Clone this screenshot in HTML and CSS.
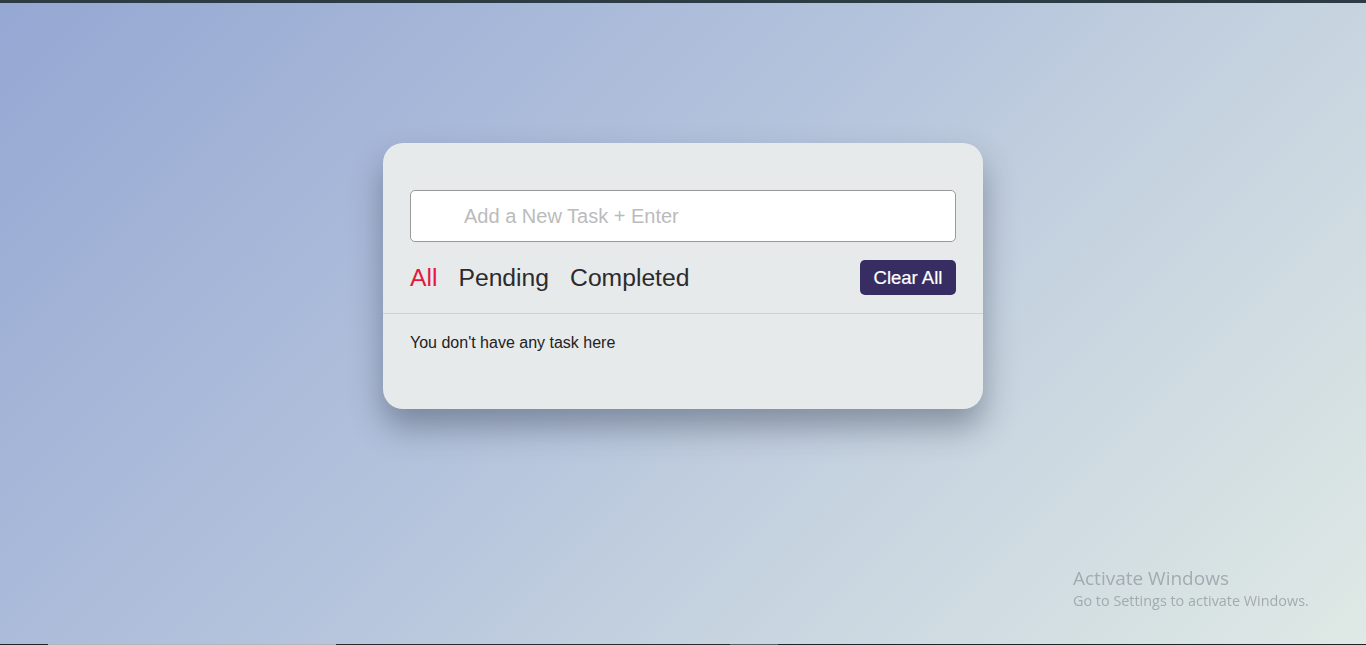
FILE: index.html
```html
<!DOCTYPE html>
<html lang="en">
<head>
<meta charset="utf-8">
<title>Todo</title>
<link rel="stylesheet" href="styles.css">
</head>
<body>
<div class="topbar"></div>
<main class="stage">
  <section class="card">
    <div class="task-input">
      <input type="text" placeholder="Add a New Task + Enter">
    </div>
    <div class="controls">
      <nav class="filters">
        <span class="filter active">All</span>
        <span class="filter">Pending</span>
        <span class="filter">Completed</span>
      </nav>
      <button class="clear-btn">Clear All</button>
    </div>
    <div class="task-box">
      <p class="empty">You don't have any task here</p>
    </div>
  </section>
</main>
<div class="taskbar">
  <span class="seg s1"></span>
  <span class="seg s2"></span>
  <span class="seg s3"></span>
  <span class="seg s4"></span>
  <span class="seg s5"></span>
</div>
<div class="watermark">
  <div class="wm-title">Activate Windows</div>
  <div class="wm-sub">Go to Settings to activate Windows.</div>
</div>
</body>
</html>
```
FILE: styles.css
```css
* { box-sizing: border-box; }
html, body { margin: 0; padding: 0; height: 100%; }
body {
  height: 645px;
  overflow: hidden;
  display: flex;
  flex-direction: column;
  font-family: "Liberation Sans", Arial, sans-serif;
  background: linear-gradient(135deg, #95a7d3 0%, #b4c3dc 45%, #cdd9e1 75%, #dfe9e5 100%);
}
.topbar { height: 3px; background: #2c3b44; flex: none; }
.stage {
  flex: 1;
  display: flex;
  justify-content: center;
  align-items: flex-start;
  padding-top: 140px;
}
.card {
  width: 600px;
  height: 266px;
  background: #e7eaeb;
  border-radius: 20px;
  box-shadow: 0 18px 32px rgba(45, 55, 75, 0.42);
  padding-top: 47px;
}
.task-input { padding: 0 27px; }
.task-input input {
  display: block;
  width: 100%;
  height: 52px;
  border: 1px solid #999;
  border-radius: 5px;
  background: #fff;
  padding: 0 0 0 53px;
  font-family: "Liberation Sans", Arial, sans-serif;
  font-size: 20px;
  outline: none;
}
.task-input input::placeholder { color: #bbbbbb; }
.controls {
  display: flex;
  align-items: center;
  justify-content: space-between;
  padding: 18px 27px 18px;
  border-bottom: 1px solid #cfd2d4;
}
.filters { display: flex; gap: 21px; }
.filter { font-size: 24.7px; color: #2b2b2e; line-height: 28px; }
.filter.active { color: #e4183f; }
.clear-btn {
  width: 96px;
  height: 35px;
  border: none;
  border-radius: 5px;
  background: #372d63;
  color: #fff;
  font-family: "Liberation Sans", Arial, sans-serif;
  font-size: 18.5px;
  padding: 0;
  -webkit-text-stroke: 0.2px #fff;
}
.task-box { padding: 20px 27px; }
.empty { margin: 0; font-size: 16px; color: #222; line-height: 18px; }
.taskbar { height: 1px; display: flex; flex: none; }
.seg { height: 1px; }
.s1 { width: 48px; background: #222428; }
.s2 { width: 288px; background: #b3b6bb; }
.s3 { width: 394px; background: #2b2a2c; }
.s4 { width: 48px; background: #5a5f63; }
.s5 { flex: 1; background: #1e2428; }
.watermark {
  position: fixed;
  left: 1073px;
  top: 566px;
  font-family: "Open Sans", "Noto Sans", sans-serif;
  color: #a3abb1;
}
.wm-title { font-size: 19px; line-height: 24px; }
.wm-sub { font-size: 14.4px; line-height: 21px; }
```
